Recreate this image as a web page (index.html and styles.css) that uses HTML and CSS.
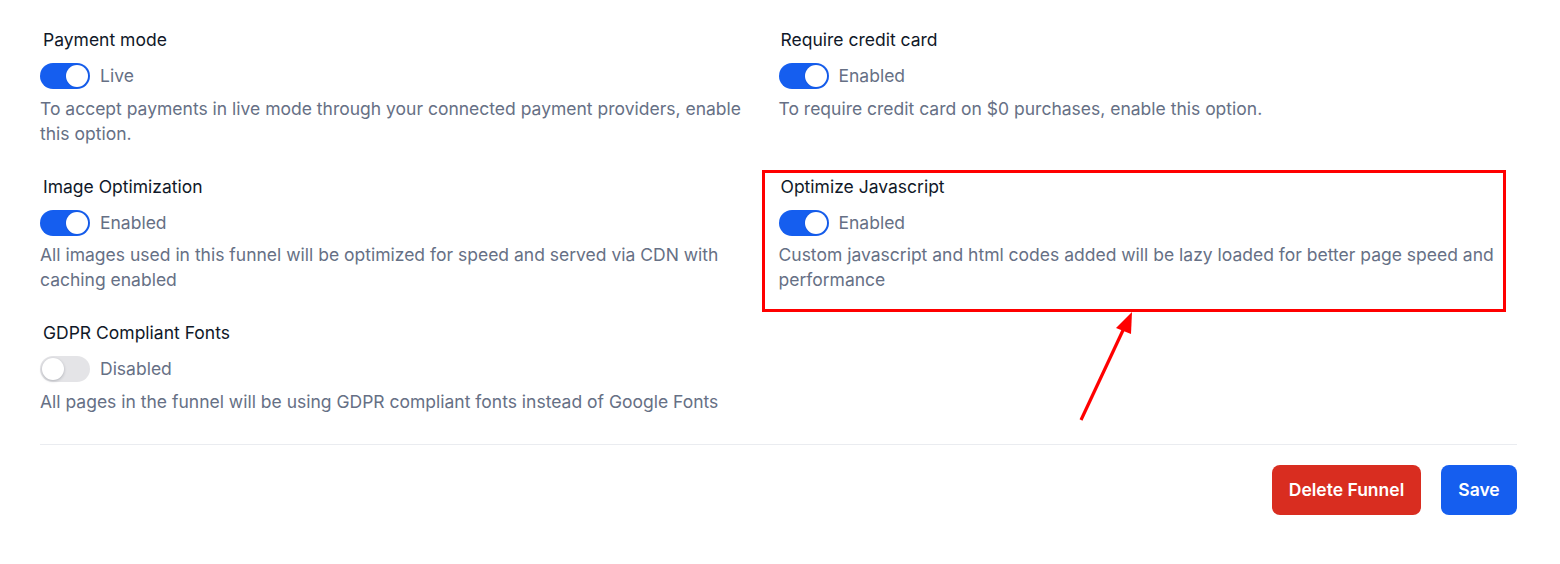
FILE: index.html
```html
<!DOCTYPE html>
<html lang="en">
<head>
<meta charset="utf-8">
<title>Funnel settings</title>
<link rel="stylesheet" href="styles.css">
</head>
<body>
<div class="page">
  <div class="grid">
    <div class="setting">
      <div class="label">Payment mode</div>
      <div class="toggle-row"><span class="toggle on"><span class="knob"></span></span><span class="state">Live</span></div>
      <p class="desc">To accept payments in live mode through your connected payment providers, enable this option.</p>
    </div>
    <div class="setting">
      <div class="label">Require credit card</div>
      <div class="toggle-row"><span class="toggle on"><span class="knob"></span></span><span class="state">Enabled</span></div>
      <p class="desc">To require credit card on $0 purchases, enable this option.</p>
    </div>
    <div class="setting">
      <div class="label">Image Optimization</div>
      <div class="toggle-row"><span class="toggle on"><span class="knob"></span></span><span class="state">Enabled</span></div>
      <p class="desc">All images used in this funnel will be optimized for speed and served via CDN with caching enabled</p>
    </div>
    <div class="setting highlighted">
      <div class="label">Optimize Javascript</div>
      <div class="toggle-row"><span class="toggle on"><span class="knob"></span></span><span class="state">Enabled</span></div>
      <p class="desc">Custom javascript and html codes added will be lazy loaded for better page speed and performance</p>
      <div class="highlight-box"></div>
    </div>
    <div class="setting">
      <div class="label">GDPR Compliant Fonts</div>
      <div class="toggle-row"><span class="toggle"><span class="knob"></span></span><span class="state">Disabled</span></div>
      <p class="desc">All pages in the funnel will be using GDPR compliant fonts instead of Google Fonts</p>
    </div>
  </div>
  <div class="footer">
    <button class="btn btn-danger">Delete Funnel</button>
    <button class="btn btn-primary">Save</button>
  </div>
  <svg class="arrow" width="80" height="120" viewBox="0 0 80 120">
    <line x1="20" y1="108" x2="64" y2="14" stroke="#ff0000" stroke-width="3.2"/>
    <polygon points="71,0 55,16 70,22" fill="#ff0000"/>
  </svg>
</div>
</body>
</html>
```

FILE: styles.css
```css
* { box-sizing: border-box; }
html, body { margin: 0; padding: 0; background: #ffffff; }
body {
  font-family: Inter, "Noto Sans", "Liberation Sans", sans-serif;
}
.page {
  position: relative;
  width: 1560px;
  height: 564px;
  padding: 28px 43px 0 40px;
}
.grid {
  display: grid;
  grid-template-columns: 1fr 1fr;
  row-gap: 29px;
  column-gap: 0;
}
.setting { position: relative; padding-right: 14px; }
.label {
  font-size: 17.5px;
  line-height: 24px;
  color: #101828;
  padding-left: 3px;
}
.setting:nth-child(even) .label { padding-left: 2px; }
.toggle-row {
  display: flex;
  align-items: center;
  gap: 10px;
  margin-top: 11px;
  height: 26px;
}
.toggle {
  position: relative;
  width: 50px;
  height: 26px;
  border-radius: 13px;
  background: #e4e4e7;
  display: inline-block;
  flex: none;
}
.toggle.on { background: #155eef; }
.knob {
  position: absolute;
  top: 2px;
  left: 2px;
  width: 22px;
  height: 22px;
  border-radius: 50%;
  background: #ffffff;
  box-shadow: 0 1px 3px rgba(16, 24, 40, 0.25);
}
.toggle.on .knob { left: 26px; box-shadow: 0 0 0 1px rgba(16,24,40,0.05); }
.state {
  font-size: 17.5px;
  line-height: 24px;
  color: #667085;
}
.desc {
  margin: 6.5px 0 0 0;
  font-size: 17.5px;
  line-height: 25px;
  color: #667085;
}
.highlight-box {
  position: absolute;
  left: -16.5px;
  top: -5px;
  width: 744px;
  height: 142px;
  border: 3px solid #ff0000;
  pointer-events: none;
}
.footer {
  margin-top: 30px;
  border-top: 1px solid #eaecf0;
  padding-top: 20px;
  display: flex;
  justify-content: flex-end;
  gap: 20px;
}
.btn {
  height: 50px;
  border: none;
  border-radius: 8px;
  font-family: Inter, "Noto Sans", "Liberation Sans", sans-serif;
  font-size: 17.5px;
  font-weight: 600;
  color: #ffffff;
  padding: 0;
}
.btn-danger { background: #d92d20; width: 149px; }
.btn-primary { background: #155eef; width: 76px; }
.arrow {
  position: absolute;
  left: 1061px;
  top: 312px;
}
```
